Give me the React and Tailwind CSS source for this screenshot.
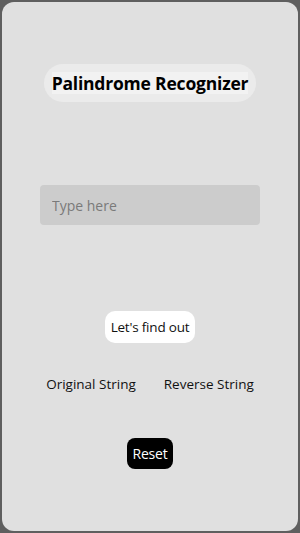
export default function App() {
  return (
    <div className="w-[300px] h-[533px] bg-[#5f5f5f] p-[2px]" style={{ fontFamily: '"Open Sans", "Noto Sans", sans-serif' }}>
      <div className="h-full bg-[#e0e0e0] rounded-[12px] flex flex-col items-center">
        <div className="mt-[62px] px-[8px] py-[8px] rounded-full bg-[#ebebeb]">
          <h1 className="bg-[#f2f2f2] text-[17.5px] font-bold text-black leading-[22px] tracking-[-0.2px]">Palindrome Recognizer</h1>
        </div>
        <input
          className="mt-[83px] w-[220px] h-[40px] bg-[#cccccc] rounded-[4px] px-[12px] text-[14px] placeholder:text-[#7a7a7a] outline-none"
          placeholder="Type here"
        />
        <button className="mt-[86px] h-[32px] px-[6px] bg-white rounded-[10px] text-[13.5px] tracking-[-0.2px] text-[#111]">Let's find out</button>
        <div className="mt-[31px] flex gap-[28px] text-[13.5px] text-[#111]">
          <span>Original String</span>
          <span>Reverse String</span>
        </div>
        <button className="mt-[44px] h-[31px] px-[5px] bg-black text-white rounded-[8px] text-[14px] tracking-[-0.2px]">Reset</button>
      </div>
    </div>
  );
}
